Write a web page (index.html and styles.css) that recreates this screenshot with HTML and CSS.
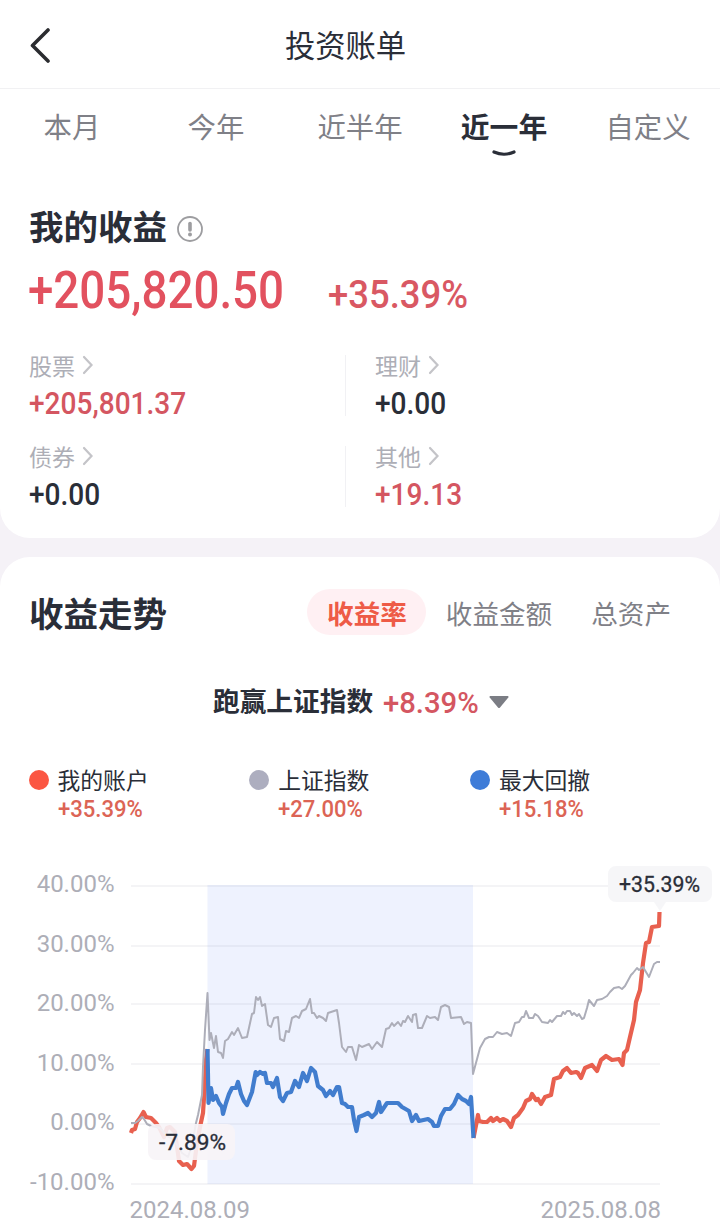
FILE: index.html
```html
<!DOCTYPE html>
<html lang="zh-CN">
<head>
<meta charset="utf-8">
<title>投资账单</title>
<link rel="stylesheet" href="styles.css">
</head>
<body>
<header class="header">
  <svg class="back" width="24" height="36" viewBox="0 0 24 36"><path d="M20 3 4.500 18.500 20 34"/></svg>
  <h1 class="title">投资账单</h1>
</header>

<main>
<section class="card card-top">
  <nav class="tabs">
    <span class="tab">本月</span>
    <span class="tab">今年</span>
    <span class="tab">近半年</span>
    <span class="tab active">近一年<svg class="smile" width="26" height="8" viewBox="0 0 26 8"><path d="M3 2q10 4.500 20 0"/></svg></span>
    <span class="tab">自定义</span>
  </nav>
  <div class="heading">
    <h2>我的收益</h2>
    <svg width="28" height="28" viewBox="0 0 28 28"><circle class="info-ring" cx="14" cy="14" r="12"/><path class="info-bar" d="M14 8.500v6.500"/><circle class="info-dot" cx="14" cy="19.500" r="2"/></svg>
  </div>
  <div class="total">
    <span class="total-amount"><span class="num">+205,820.50</span></span>
    <span class="total-rate"><span class="num">+35.39%</span></span>
  </div>
  <div class="grid">
    <div class="cell"><div class="label">股票<svg class="chev" width="12" height="20" viewBox="0 0 12 20"><path d="m2 2 7.500 8L2 18"/></svg></div><div class="value up"><span class="num">+205,801.37</span></div></div>
    <div class="cell right"><div class="label">理财<svg class="chev" width="12" height="20" viewBox="0 0 12 20"><path d="m2 2 7.500 8L2 18"/></svg></div><div class="value"><span class="num">+0.00</span></div></div>
    <div class="cell"><div class="label">债券<svg class="chev" width="12" height="20" viewBox="0 0 12 20"><path d="m2 2 7.500 8L2 18"/></svg></div><div class="value"><span class="num">+0.00</span></div></div>
    <div class="cell right"><div class="label">其他<svg class="chev" width="12" height="20" viewBox="0 0 12 20"><path d="m2 2 7.500 8L2 18"/></svg></div><div class="value up"><span class="num">+19.13</span></div></div>
  </div>
</section>

<section class="card card-trend">
  <div class="trend-head">
    <h2>收益走势</h2>
    <div class="modes">
      <span class="mode on">收益率</span>
      <span class="mode">收益金额</span>
      <span class="mode">总资产</span>
    </div>
  </div>
  <div class="compare">
    <span class="compare-name">跑赢上证指数</span>
    <span class="compare-rate"><span class="num">+8.39%</span></span>
    <svg class="caret-icon" width="22" height="14" viewBox="0 0 22 14"><path class="caret" d="M2 1h18q1 .5.300 1.500L12 12.500q-1 1-2 0L1.700 2.500Q1 1.500 2 1z"/></svg>
  </div>
  <div class="legend">
    <div class="item"><i class="dot red"></i><div><div class="name">我的账户</div><div class="rate"><span class="num">+35.39%</span></div></div></div>
    <div class="item"><i class="dot gray"></i><div><div class="name">上证指数</div><div class="rate"><span class="num">+27.00%</span></div></div></div>
    <div class="item"><i class="dot blue"></i><div><div class="name">最大回撤</div><div class="rate"><span class="num">+15.18%</span></div></div></div>
  </div>
  <svg class="chart" width="720" height="372" viewBox="0 860 720 372">
    <rect class="range" x="207.500" y="885" width="265.500" height="299"/>
    <path class="gridline" d="M131 886H660M131 946H660M131 1004H660M131 1064H660M131 1124H660M131 1184H660"/>
    <g class="axis">
      <text x="114.500" y="892">40.00%</text>
      <text x="114.500" y="952">30.00%</text>
      <text x="114.500" y="1011">20.00%</text>
      <text x="114.500" y="1071">10.00%</text>
      <text x="114.500" y="1130">0.00%</text>
      <text x="114.500" y="1190">-10.00%</text>
      <text x="250" y="1218">2024.08.09</text>
      <text x="661" y="1218">2025.08.08</text>
    </g>
    <polyline class="line account" points="131,1133 132,1130 135,1129 137,1122 140,1118 143.500,1112 146,1117 151,1118 156,1123 159,1127 164,1137 167,1128 170,1127 175,1132 179,1161 183,1165 187,1164 191.500,1169 194,1166 197,1143 200,1127 203,1113 204.500,1090 206,1060 207.500,1049"/>
    <polyline class="line account" points="473.500,1138 478,1115 479,1121 483,1122 487,1122 491,1118 493,1121 497,1118 500,1121 503,1119 507,1121 511,1127 514,1118 518,1115 523,1108 526,1101 530,1099 532,1094 536,1100 538,1099 541,1104 545,1097 551,1095 554,1079 560,1077 563,1071 567,1068 571,1073 576,1072 578,1073 581,1078 585,1068 592,1065 597,1071 601,1060 606,1056 612,1060 619,1059 622.500,1065 624,1053 627,1050 630,1037 634,1020 636,1002 640,990 643,963 646,943 649,942 652,927 659,926 659.500,912"/>
    <polyline class="line drawdown" points="207.500,1049 208.500,1103 211,1088 213,1100 216,1096 219,1103 222,1107 223,1114 226,1103 229,1094 232,1088 236,1088 238,1082 241,1094 244,1101 247,1105 252,1092 255.700,1072 257,1075 260,1072 263,1074 265,1073 267,1083 271,1083 273,1087 277,1078 280,1097 283,1101 287,1093 291,1092 295,1081 299,1087 303,1073 307,1081 311,1068 315,1072 318,1086 323,1090 326,1096 330,1091 333,1095 337,1087 339,1087 342,1103 345,1104 348,1107 352,1107 354,1120 356.500,1131 359,1117 364,1115 368,1113 372,1117 376,1113 379,1102 381,1112 387,1103 398,1103 402,1107 409,1111 412,1121 416,1115 419,1121 428,1119 432,1122 434,1126 438,1126 441,1116 445,1109 450,1109 454,1104 458,1095 462,1099 466,1101 469,1104 471,1097 473.500,1138"/>
    <polyline class="line index" points="131,1123 135,1123 138,1121 142,1117 144,1119 147,1124 151,1126 160,1128 167,1136 174,1140 182,1153 188,1157 192,1145 196,1123 198,1115 202,1095 203,1067 205,1030 207.500,993 209.500,1040 211,1033 214,1048 216,1036 218,1052 221,1053 223,1058 225,1041 228,1039 232,1032 234,1035 238,1028 242,1038 247,1037 252,1014 254,1013 256,997 258,1000 260,997 262,1006 265,1004 268,1025 271,1027 274,1018 278,1017 280,1039 284,1041 286,1031 289,1032 292,1018 296,1016 299,1018 302,1011 306,1009 310,999 312,1013 314,1013 317,1018 319,1016 323,1018 326,1021 328,1013 337,1010 339,1023 342,1047 346,1052 348,1047 352,1047 356,1060 359,1045 362,1047 369,1044 372,1049 377,1042 382,1047 386,1029 389,1028 392,1023 394,1026 398,1022 401,1026 403,1021 405,1022 408,1016 412,1022 413,1015 416,1014 418,1028 422,1028 427,1016 430,1018 435,1017 438,1020 441,1007 445,1005 449,1007 451,1018 461,1017 464,1024 467,1022 471,1023 473,1074 480,1048 485,1039 489,1037 493,1037 497,1032 502,1034 507,1033 511,1036 515,1023 519,1022 522,1017 524,1017 526,1011 529,1018 533,1018 535,1014 538,1016 542,1022 548,1023 550,1020 552,1022 557,1016 561,1016 563,1012 565,1014 567,1011 570,1011 572,1015 574,1013 577,1016 579,1014 582,1019 584,1018 587,1008 589,1000 594,1006 597,1000 602,999 607,996 610,992 614,988 619,987 622,989 625,986 631,975 633,973 637,968 639,970 643,967 649,977 654,964 657,962 660,962"/>
    <path class="tip" d="M616 866H704a8 8 0 0 1 8 8V894a8 8 0 0 1-8 8H666L660 911 654 902H616a8 8 0 0 1-8-8V874a8 8 0 0 1 8-8z"/>
    <text class="tip-text" x="619" y="892" textLength="81" lengthAdjust="spacingAndGlyphs">+35.39%</text>
    <rect class="tip low" x="148" y="1124" width="87" height="36" rx="8"/>
    <text class="tip-text" x="159" y="1150" textLength="67" lengthAdjust="spacingAndGlyphs">-7.89%</text>
  </svg>
</section>
</main>
</body>
</html>
```
FILE: styles.css
```css
* { box-sizing: border-box; }
body {
  margin: 0;
  width: 720px;
  height: 1232px;
  overflow: hidden;
  background: #f5f2f7;
  color: #2a2e38;
  font-family: "Noto Sans CJK SC", sans-serif;
}
h1, h2 { margin: 0; }
svg { display: block; flex: none; }

.header {
  display: flex;
  align-items: center;
  height: 89px;
  padding: 2px 0 0 28px;
  background: #fff;
  border-bottom: 1px solid #f1f1f3;
}
.back path { fill: none; stroke: #2b2c30; stroke-width: 3.6; stroke-linecap: round; stroke-linejoin: round; }
.title { width: 587px; text-align: center; font-size: 30.3px; font-weight: 400; line-height: 44px; padding-bottom: 2px; }

.card { background: #fff; }
.card-top { height: 449px; border-radius: 0 0 30px 30px; }
.tabs { display: grid; grid-template-columns: repeat(5, 1fr); height: 74px; }
.tab { position: relative; text-align: center; font-size: 28.4px; line-height: 74px; color: #7f8087; }
.tab.active { color: #2a2e38; font-weight: 700; font-size: 28.8px; }
.smile { position: absolute; left: 59px; top: 61px; }
.smile path { fill: none; stroke: #2a2e38; stroke-width: 3.2; stroke-linecap: round; }

.heading { display: flex; align-items: center; gap: 9px; height: 50px; margin-top: 37px; padding-left: 29px; }
.heading svg { margin-top: 7px; }
h2 { font-size: 34.5px; line-height: 50px; font-weight: 700; white-space: nowrap; }
.heading h2 { padding-bottom: 1px; }
.info-ring { fill: none; stroke: #9d9da0; stroke-width: 1.8; }
.info-bar { stroke: #9d9da0; stroke-width: 3.6; stroke-linecap: round; }
.info-dot { fill: #9d9da0; }

.num { display: inline-block; font-family: Roboto, sans-serif; font-weight: 500; transform-origin: 0 50%; white-space: nowrap; }
.total { display: flex; align-items: baseline; height: 84px; padding-left: 28px; color: #e2515f; }
.total-amount { width: 300px; font-size: 51px; line-height: 73px; }
.total-amount .num { transform: scaleX(.896); }
.total-rate { font-size: 39px; color: #d95863; }
.total-rate .num { transform: scaleX(.935); }

.grid { display: grid; grid-template-columns: 345px 1fr; row-gap: 30px; margin-top: 21px; }
.cell { height: 61px; padding-left: 29px; }
.cell.right { border-left: 1px solid #f1f1f4; }
.label { display: flex; align-items: center; gap: 7px; height: 20px; font-size: 23px; line-height: 20px; color: #adaeb6; }
.chev path { fill: none; stroke: #c4c4c8; stroke-width: 2.2; stroke-linecap: round; }
.value { height: 39px; font-size: 31px; line-height: 51px; }
.value .num { transform: scaleX(.905); }
.up { color: #d45661; }

.card-trend { height: 675px; margin-top: 19px; padding-top: 32px; border-radius: 30px 30px 0 0; }
.trend-head { display: flex; align-items: center; justify-content: space-between; height: 46px; padding: 0 49px 0 29px; }
.modes { display: flex; align-items: center; }
.mode { height: 46px; font-size: 26.600px; line-height: 48px; color: #7f8087; }
.mode + .mode { margin-left: 39px; }
.mode.on { padding: 0 19px 0 20px; border-radius: 23px; background: #fff0f3; color: #ee5b47; font-weight: 700; }
.mode.on + .mode { margin-left: 20px; }

.compare { display: flex; align-items: center; height: 40px; margin-top: 46px; padding-left: 213px; }
.compare-name { width: 170px; font-size: 26.700px; font-weight: 700; line-height: 38px; padding-bottom: 2px; }
.compare-rate { width: 105px; font-size: 30px; line-height: 40px; color: #d45661; }
.compare-rate .num { transform: scaleX(.975); }
.caret-icon { margin-top: 2px; }
.caret { fill: #7b7d84; }

.legend { display: flex; height: 60px; margin-top: 47px; padding-left: 28.5px; }
.item { display: flex; gap: 9px; width: 220.700px; }
.dot { width: 20px; height: 20px; margin-top: 1.5px; border-radius: 50%; }
.dot.red { background: #fb5642; }
.dot.gray { background: #adaebf; }
.dot.blue { background: #3e7cd8; }
.name { height: 24px; font-size: 22.800px; line-height: 24px; }
.rate { font-size: 23px; line-height: 30px; color: #dc6455; }
.rate .num { transform: scaleX(.96); }

.chart { margin-top: 32px; font-family: Roboto, sans-serif; }
.range { fill: #eef2fe; }
.gridline { fill: none; stroke: #8888a0; stroke-opacity: .12; stroke-width: 1.6; }
.axis text { fill: #adaeb7; font-size: 24px; text-anchor: end; }
.line { fill: none; stroke-linejoin: round; }
.account { stroke: #e8604f; stroke-width: 4.200; }
.drawdown { stroke: #417dce; stroke-width: 4.200; }
.index { stroke: #adaeb9; stroke-width: 2; }
.tip { fill: #f6f6f8; fill-opacity: .96; }
.tip.low { fill: #f7f4f7; fill-opacity: .9; }
.tip-text { fill: #2a2e38; font-size: 21.500px; font-weight: 400; stroke: #2a2e38; stroke-width: .3; }
```
